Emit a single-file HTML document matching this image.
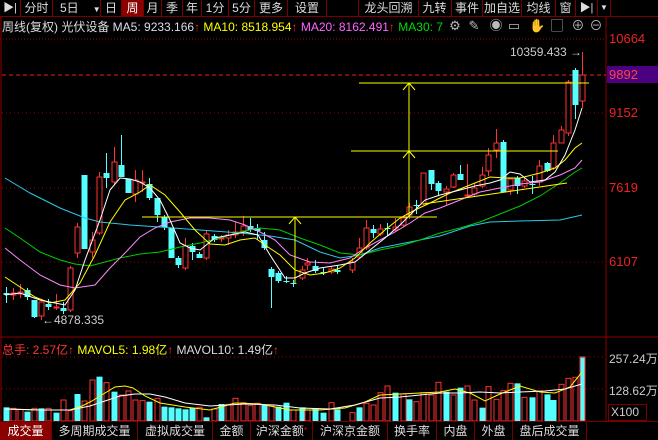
<!DOCTYPE html>
<html><head><meta charset="utf-8"><style>
body{margin:0;background:#000;width:658px;height:440px;overflow:hidden;position:relative;font-family:"Liberation Sans","Noto Sans CJK SC",sans-serif;}
.t{position:absolute;white-space:nowrap;}
.tb{position:absolute;top:0;height:16px;border-right:1px solid #7a0000;color:#ddd;font-size:12px;line-height:16px;text-align:center;white-space:nowrap;overflow:hidden;}
.bt{position:absolute;top:422px;height:18px;border-right:1px solid #7a0000;color:#ddd;font-size:12px;line-height:18px;text-align:center;white-space:nowrap;}
.ic{position:absolute;top:19px;width:14px;height:14px;color:#bbb;font-size:13px;line-height:14px;text-align:center;}
</style></head><body>
<svg id="s" width="658" height="440" style="position:absolute;left:0;top:0" xmlns="http://www.w3.org/2000/svg"></svg>
<div style="position:absolute;left:0;top:16px;width:658px;height:1px;background:#7a0000"></div>
<div class="tb" style="left:0;width:20px;font-size:11px">▶|</div>
<div class="tb" style="left:21px;width:31px">分时</div>
<div class="tb" style="left:53px;width:47px;text-align:left;text-indent:7px">5日<span style="font-size:8px;margin-left:14px">▼</span></div>
<div class="tb" style="left:101px;width:20px">日</div>
<div class="tb" style="left:122px;width:21px;background:#8b0000;color:#fff">周</div>
<div class="tb" style="left:144px;width:17px">月</div>
<div class="tb" style="left:162px;width:20px">季</div>
<div class="tb" style="left:183px;width:18px">年</div>
<div class="tb" style="left:202px;width:26px">1分</div>
<div class="tb" style="left:229px;width:25px">5分</div>
<div class="tb" style="left:255px;width:32px">更多</div>
<div class="tb" style="left:288px;width:38px">设置</div>
<div class="tb" style="left:358px;width:59px;border-left:1px solid #7a0000">龙头回溯</div>
<div class="tb" style="left:418px;width:33px">九转</div>
<div class="tb" style="left:452px;width:30px">事件</div>
<div class="tb" style="left:483px;width:38px">加自选</div>
<div class="tb" style="left:522px;width:33px">均线</div>
<div class="tb" style="left:556px;width:19px">窗</div>
<div class="tb" style="left:576px;width:21px;font-size:11px">▶|</div>
<div class="tb" style="left:598px;width:12px;font-size:8px">▼</div>
<div class="t" style="left:2px;top:19px;font-size:12px;line-height:17px;color:#ddd">周线(复权) 光伏设备 <span style="color:#dde">MA5: 9233.166</span><span style="color:#f22">↑</span> <span style="color:#ff0">MA10: 8518.954</span><span style="color:#f22">↑</span> <span style="color:#f6f">MA20: 8162.491</span><span style="color:#f22">↑</span> <span style="color:#0d0">MA30: 7</span></div>
<div class="ic" style="left:448px">⚙</div>
<div class="ic" style="left:467px">✎</div>
<div class="ic" style="left:489px">◉</div>
<div class="ic" style="left:507px">▭</div>
<div class="ic" style="left:529px">✋</div>
<div class="ic" style="left:550px">▢</div>
<div class="ic" style="left:571px">⊕</div>
<div class="ic" style="left:589px">⊖</div>
<div class="t" style="left:607px;top:66px;width:51px;height:17px;background:#4b0082"></div>
<div class="t" style="left:609px;top:31px;font-size:13px;color:#e22">10664</div>
<div class="t" style="left:609px;top:67px;font-size:13px;color:#f44">9892</div>
<div class="t" style="left:609px;top:105px;font-size:13px;color:#e22">9152</div>
<div class="t" style="left:609px;top:180px;font-size:13px;color:#e22">7619</div>
<div class="t" style="left:609px;top:254px;font-size:13px;color:#e22">6107</div>
<div class="t" style="left:510px;top:45px;font-size:12px;color:#ccc">10359.433 →</div>
<div class="t" style="left:42px;top:313px;font-size:12px;color:#ccc">←4878.335</div>
<div class="t" style="left:2px;top:341px;font-size:12px;color:#ddd"><span style="color:#f33">总手: 2.57亿↑</span> <span style="color:#ff0">MAVOL5: 1.98亿</span><span style="color:#f22">↑</span> MAVOL10: 1.49亿<span style="color:#f22">↑</span></div>
<div class="t" style="left:609px;top:350px;font-size:12px;color:#ccc">257.24万</div>
<div class="t" style="left:609px;top:382px;font-size:12px;color:#ccc">128.62万</div>
<div class="t" style="left:608px;top:404px;width:35px;height:15px;border:1px solid #7a0000;font-size:12px;color:#ccc;line-height:15px;padding-left:2px">X100</div>
<div style="position:absolute;left:0;top:421px;width:658px;height:1px;background:#7a0000"></div>
<div class="bt" style="left:0;width:51px;background:#8b0000;color:#fff">成交量</div>
<div class="bt" style="left:52px;width:85px">多周期成交量</div>
<div class="bt" style="left:138px;width:74px">虚拟成交量</div>
<div class="bt" style="left:213px;width:37px">金额</div>
<div class="bt" style="left:251px;width:61px">沪深金额<span style="color:#f00;font-size:8px;vertical-align:top">*</span></div>
<div class="bt" style="left:313px;width:74px">沪深京金额</div>
<div class="bt" style="left:388px;width:48px">换手率</div>
<div class="bt" style="left:437px;width:37px">内盘</div>
<div class="bt" style="left:475px;width:37px">外盘</div>
<div class="bt" style="left:513px;width:73px">盘后成交量</div>
<script>
var s=document.getElementById('s'),h='';
function L(x1,y1,x2,y2,c,w,d){h+='<line x1="'+x1+'" y1="'+y1+'" x2="'+x2+'" y2="'+y2+'" stroke="'+c+'" stroke-width="'+(w||1)+'"'+(d?' stroke-dasharray="'+d+'"':'')+'/>';}
function P(pts,c){h+='<polyline fill="none" stroke="'+c+'" stroke-width="1" points="'+pts.map(p=>p.join(',')).join(' ')+'"/>';}
L(606,16,606,421,'#8b0000');L(1,16,1,421,'#8b0000');
L(0,39,606,39,'#a00000',1,'1,2');
L(0,337,658,337,'#8b0000');
[113,188,262].forEach(y=>L(2,y,606,y,'#900',1,'1,3'));
L(2,75,606,75,'#e22',1,'4,3');
[357,389].forEach(y=>L(2,y,606,y,'#900',1,'1,3'));
var C=[[6,0,293,295,287,303],[13,1,293,295,288,300],[20,1,292,294,284,298],[27,0,290,297,288,300],[34,0,300,317,300,318],[41,1,302,316,300,320],[48,0,304,307,299,310],[56,1,307,308,294,310],[63,0,308,311,302,314],[70,1,268,310,266,312],[77,1,227,253,223,258],[84,0,175,249,175,249],[92,1,240,252,232,258],[99,1,177,233,172,235],[106,0,173,178,153,188],[114,1,162,182,147,185],[121,0,165,177,135,177],[128,0,179,193,179,193],[135,1,180,194,170,202],[142,1,182,183,170,192],[149,0,184,198,178,200],[157,0,198,215,198,222],[164,0,217,227,215,230],[171,0,228,258,228,258],[178,0,258,265,256,268],[185,1,246,268,238,270],[192,0,246,252,243,260],[199,0,254,258,252,258],[206,1,234,258,230,260],[214,0,236,240,234,242],[221,1,238,239,235,242],[228,1,235,238,230,245],[235,1,232,235,222,238],[243,1,226,231,216,236],[250,0,226,230,218,232],[257,0,228,231,224,240],[264,0,240,248,232,250],[271,0,269,277,267,308],[278,0,273,281,271,283],[286,0,281,282,276,283],[293,0,283,284,280,287],[302,1,270,278,266,280],[307,1,263,265,258,270],[315,0,266,271,260,273],[323,0,272,273,268,275],[331,1,269,272,266,274],[337,0,270,272,265,274],[352,1,262,270,258,273],[359,1,248,257,238,258],[366,1,228,248,220,250],[373,0,229,233,225,238],[380,1,229,234,224,236],[387,0,228,229,223,236],[395,1,227,230,218,232],[403,1,218,225,216,227],[409,1,207,215,203,219],[416,0,205,206,200,214],[423,1,173,204,173,205],[431,0,170,184,170,190],[438,0,183,191,181,196],[446,1,189,192,186,205],[453,1,175,187,173,188],[460,0,174,180,165,180],[467,1,195,196,164,197],[474,1,188,194,183,196],[482,1,175,186,167,188],[488,1,155,171,148,176],[496,1,143,150,129,158],[503,0,142,192,140,192],[510,1,179,190,178,195],[517,0,178,186,176,194],[524,1,181,186,178,188],[532,0,184,185,176,194],[539,1,166,182,160,186],[547,0,163,171,162,172],[553,1,143,168,135,170],[561,1,130,143,126,143],[568,1,82,133,80,136],[575,0,70,105,68,119],[582,1,75,101,52,108]];
C.forEach(c=>{var col=c[1]?'#f33':'#5ff';
 L(c[0]+.5,c[4],c[0]+.5,c[2],col);L(c[0]+.5,c[3],c[0]+.5,c[5],col);
 if(c[1])h+='<rect x="'+(c[0]-2)+'" y="'+c[2]+'" width="5" height="'+Math.max(1,c[3]-c[2])+'" fill="none" stroke="#f33"/>';
 else h+='<rect x="'+(c[0]-2.5)+'" y="'+c[2]+'" width="6" height="'+Math.max(1,c[3]-c[2])+'" fill="#5ff"/>';});
P([[5,178],[30,193],[60,208],[85,218],[100,222],[130,225],[160,227],[200,230],[240,233],[270,236],[295,240],[320,252],[340,258],[360,255],[380,248],[400,244],[420,240],[440,236],[470,226],[490,222],[520,221],[560,220],[582,215]],'#2cc8e8');
P([[5,228],[20,238],[40,252],[60,260],[75,264],[90,266],[105,262],[120,258],[140,254],[160,252],[180,247],[200,243],[220,238],[240,232],[260,228],[280,230],[300,238],[320,245],[340,253],[360,255],[380,250],[400,246],[420,240],[440,233],[460,228],[480,222],[500,214],[520,206],[540,196],[560,183],[575,172],[582,168]],'#0c0');
P([[5,248],[20,260],[40,275],[60,285],[75,288],[95,285],[110,268],[125,253],[140,237],[155,228],[170,222],[190,218],[210,218],[230,220],[245,225],[260,232],[275,240],[290,255],[310,262],[330,263],[350,258],[365,248],[380,240],[395,232],[410,223],[425,213],[440,208],[460,200],[480,192],[500,188],[520,184],[540,182],[560,175],[575,168],[582,160]],'#f8f');
P([[5,277],[20,287],[35,297],[50,303],[65,300],[80,283],[95,255],[110,222],[125,200],[140,192],[150,185],[165,195],[180,212],[195,230],[210,244],[225,245],[240,240],[255,238],[265,245],[280,255],[295,270],[310,275],[325,273],[340,268],[355,258],[370,243],[385,230],[400,218],[415,210],[430,203],[450,193],[470,185],[490,177],[505,178],[520,178],[540,173],[555,168],[565,160],[575,148],[582,143]],'#ff0');
P([[5,295],[20,293],[40,300],[55,303],[65,305],[75,290],[85,260],[100,220],[110,190],[120,178],[130,179],[140,182],[150,188],[160,200],[170,220],[180,243],[190,248],[200,250],[215,238],[230,235],[245,232],[258,235],[270,255],[285,278],[295,278],[305,273],[320,268],[340,265],[355,262],[370,250],[385,238],[400,225],[415,210],[425,200],[440,195],[460,190],[475,186],[490,183],[500,180],[510,172],[520,174],[530,182],[545,180],[555,172],[565,155],[575,130],[582,108]],'#fff');
var Y='#ff0';
L(142,217,437,217,Y);L(295,217,295,283,Y);L(289,224,295,217,Y);L(301,224,295,217,Y);
L(359,83,589,83,Y);L(351,151,558,151,Y);L(409,83,409,217,Y);
L(403,90,409,83,Y);L(415,90,409,83,Y);L(403,158,409,151,Y);L(415,158,409,151,Y);
L(423,204,567,183,Y);
var V=[[0,232],[1,235],[1,238],[0,245],[1,235],[0,235],[1,235],[0,248],[1,210],[1,242],[0,192],[1,213],[1,150],[0,140],[1,158],[0,185],[1,195],[1,183],[1,210],[1,212],[0,215],[1,205],[0,230],[0,232],[0,235],[0,238],[0,233],[1,232],[0,262],[1,237],[0,222],[1,223],[1,205],[1,218],[1,227],[1,220],[0,225],[1,228],[0,230],[0,218],[1,240],[0,232],[1,240],[0,235],[0,248],[1,218],[0,238],[1,248],[0,232],[1,220],[1,225],[1,188],[1,168],[0,188],[1,192],[0,208],[1,215],[1,188],[1,195],[1,157],[0,185],[1,195],[0,173],[1,168],[1,210],[0,233],[1,170],[1,208],[1,182],[1,160],[0,160],[1,202],[0,202],[1,183],[0,193],[0,210],[1,163],[1,145],[1,142],[0,80],[1,82]];
V.forEach((v,i)=>{var x=C[i]?C[i][0]:6+7.2*i,y=330+v[1]/3,hh=421-y;
 if(v[0])h+='<rect x="'+(x-2)+'" y="'+y+'" width="5" height="'+hh+'" fill="none" stroke="#f33"/>';
 else h+='<rect x="'+(x-2.5)+'" y="'+y+'" width="6" height="'+hh+'" fill="#5ff"/>';});
P([[5,409],[40,410],[70,410],[82,406],[92,401],[105,393],[115,387],[125,386],[133,388],[145,396],[160,403],[185,407],[210,410],[235,403],[260,404],[290,410],[320,410],[345,408],[365,402],[380,395],[400,394],[420,393],[440,392],[455,389],[470,393],[485,401],[500,394],[520,386],[540,392],[555,393],[570,387],[582,372]],'#ff0');
P([[5,409],[40,410],[70,410],[90,406],[105,401],[120,396],[135,394],[150,394],[165,397],[185,403],[210,406],[245,404],[275,405],[300,408],[330,409],[355,405],[380,398],[400,397],[420,395],[440,393],[460,393],[480,392],[500,393],[520,392],[545,391],[565,389],[582,384]],'#fff');
s.innerHTML=h;
</script>
</body></html>
